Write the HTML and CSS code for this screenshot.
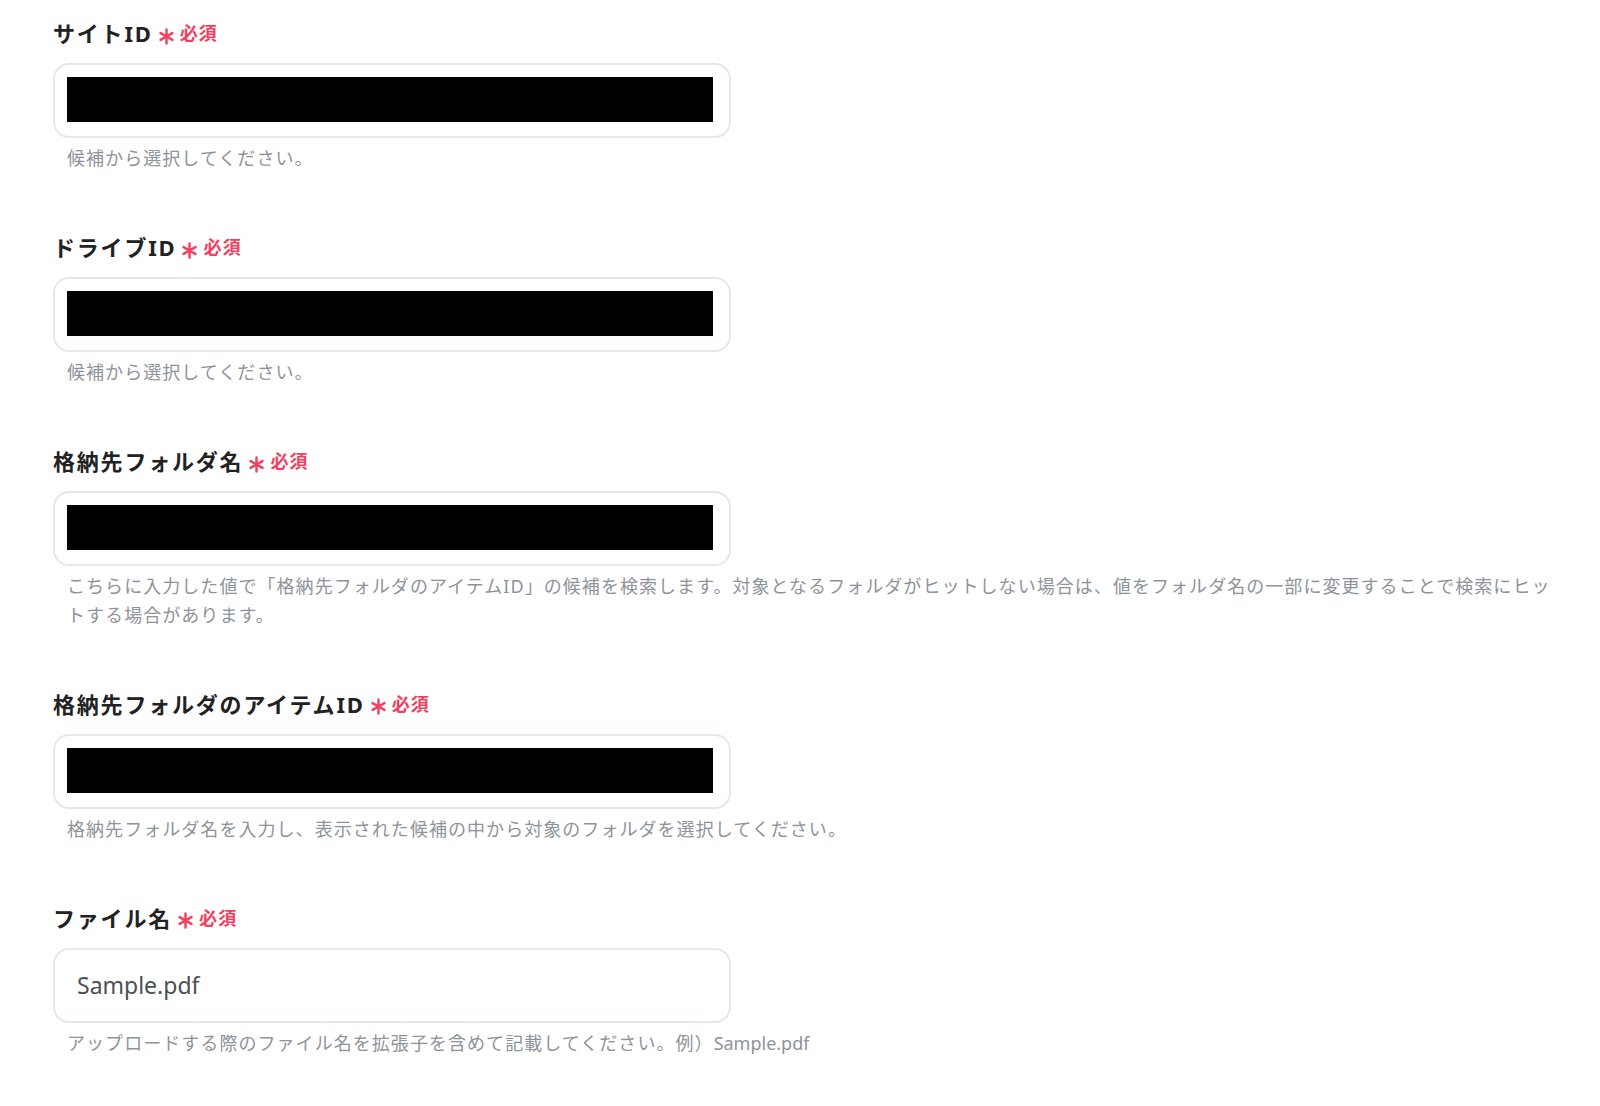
FILE: index.html
```html
<!DOCTYPE html>
<html>
  <head>
    <meta charset="utf8" />
    <title> ファイル設定 </title>
    <link rel="stylesheet" href="styles.css">
  </head>
  <body>
    <form class="form">
      <div class="field">
        <label class="label">サイトID <span class="req"><svg class="star" viewBox="0 0 16 16"><path d="M8 1.5v13M2.4 4.8l11.2 6.4M13.6 4.8l-11.2 6.4" /></svg>必須</span></label>
        <div class="box"><div class="mask"></div></div>
        <p class="help">候補から選択してください。</p>
      </div>
      <div class="field">
        <label class="label">ドライブID <span class="req"><svg class="star" viewBox="0 0 16 16"><path d="M8 1.5v13M2.4 4.8l11.2 6.4M13.6 4.8l-11.2 6.4" /></svg>必須</span></label>
        <div class="box"><div class="mask"></div></div>
        <p class="help">候補から選択してください。</p>
      </div>
      <div class="field">
        <label class="label">格納先フォルダ名 <span class="req"><svg class="star" viewBox="0 0 16 16"><path d="M8 1.5v13M2.4 4.8l11.2 6.4M13.6 4.8l-11.2 6.4" /></svg>必須</span></label>
        <div class="box"><div class="mask"></div></div>
        <p class="help">こちらに入力した値で「格納先フォルダのアイテムID」の候補を検索します。対象となるフォルダがヒットしない場合は、値をフォルダ名の一部に変更することで検索にヒットする場合があります。</p>
      </div>
      <div class="field">
        <label class="label">格納先フォルダのアイテムID <span class="req"><svg class="star" viewBox="0 0 16 16"><path d="M8 1.5v13M2.4 4.8l11.2 6.4M13.6 4.8l-11.2 6.4" /></svg>必須</span></label>
        <div class="box"><div class="mask"></div></div>
        <p class="help">格納先フォルダ名を入力し、表示された候補の中から対象のフォルダを選択してください。</p>
      </div>
      <div class="field">
        <label class="label">ファイル名 <span class="req"><svg class="star" viewBox="0 0 16 16"><path d="M8 1.5v13M2.4 4.8l11.2 6.4M13.6 4.8l-11.2 6.4" /></svg>必須</span></label>
        <div class="box text">Sample.pdf</div>
        <p class="help">アップロードする際のファイル名を拡張子を含めて記載してください。例）<span class="latin">Sample.pdf</span></p>
      </div>
    </form>
  </body>
</html>
```

FILE: styles.css
```css
body {
  margin: 0;
  background: #fff;
  font-family: "Noto Sans", "Noto Sans CJK JP", sans-serif;
}

.form {
  padding: 18px 0 0 53px;
}

.field {
  margin-bottom: 59.5px;
}

.label {
  display: flex;
  align-items: center;
  height: 28px;
  font-size: 22px;
  font-weight: bold;
  letter-spacing: 1.8px;
  color: #222;
}

.req {
  display: flex;
  align-items: center;
  margin-left: 5px;
  font-size: 18px;
  letter-spacing: 1.2px;
  color: #f2415f;
}

.star {
  width: 17px;
  height: 17px;
  margin: 8px 5px 0 0;
  fill: none;
  stroke: #f2415f;
  stroke-width: 2.3;
  stroke-linecap: round;
}

.box {
  box-sizing: border-box;
  display: flex;
  align-items: center;
  width: 678px;
  height: 75px;
  margin-top: 17px;
  padding: 0 12px;
  border: 2px solid #e4e7eb;
  border-radius: 16px;
}

.mask {
  width: 646px;
  height: 45px;
  margin-top: -2px;
  background: #000;
}

.box.text {
  padding-left: 22px;
  font-size: 23px;
  color: #4b4f56;
}

.help {
  width: 1488px;
  margin: 6px 0 0;
  padding-left: 14px;
  font-size: 18px;
  line-height: 28.6px;
  letter-spacing: 1.05px;
  color: #8e939b;
}

.latin {
  letter-spacing: 0;
}
```
